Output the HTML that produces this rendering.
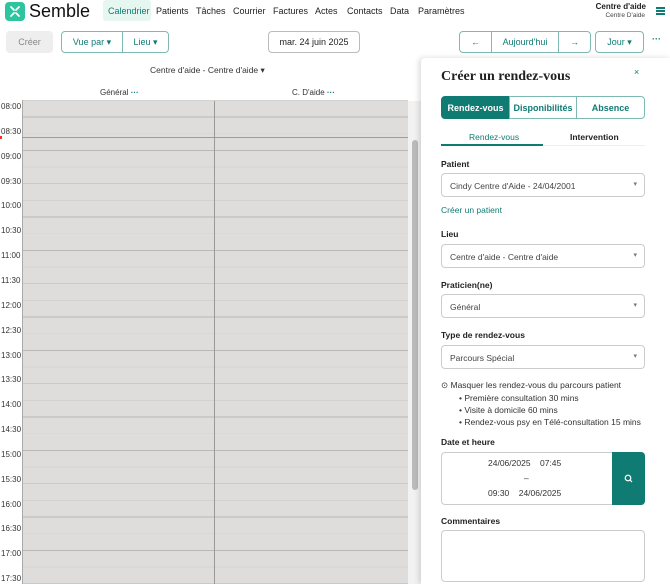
<!DOCTYPE html>
<html><head><meta charset="utf-8"><style>
*{box-sizing:border-box;margin:0;padding:0}
body{width:670px;height:584px;overflow:hidden;background:#fff;font-family:"Liberation Sans",sans-serif;color:#222;position:relative;font-size:9px}
.a{position:absolute}
.nav span{position:absolute;top:6px;font-size:9px;color:#222}
.btn{position:absolute;border:1px solid #7fb9b3;border-radius:4px;color:#0f7b73;font-size:9px;display:flex;align-items:center;justify-content:center;background:#fff}
.sel{position:absolute;left:441px;width:204px;height:24px;border:1px solid #ccc;border-radius:4px;font-size:8.5px;color:#444;padding:7px 0 0 8px}
.sel:after{content:"▾";position:absolute;right:7px;top:6px;font-size:7px;color:#777}
.fl{position:absolute;left:441px;font-size:8.5px;font-weight:bold;color:#222}
</style></head><body>
<div class="a" style="left:5px;top:2px;width:20px;height:19px;background:#2ec4a0;border-radius:4px"></div>
<svg class="a" style="left:5px;top:2px" width="20" height="19"><g stroke="#fff" stroke-width="1.8" stroke-linecap="round"><path d="M6 5l3 3M14 5l-3 3M6 14l3-3M14 14l-3-3"/></g></svg>
<div class="a" style="left:29px;top:1px;font-size:18px;color:#111">Semble</div>
<div class="a" style="left:103px;top:0;width:48px;height:21px;background:#e6f6f1;border-radius:3px"></div>
<div class="nav">
<span style="left:108px;color:#0f7b73">Calendrier</span><span style="left:156px">Patients</span><span style="left:196px">Tâches</span><span style="left:233px">Courrier</span><span style="left:273px">Factures</span><span style="left:315px">Actes</span><span style="left:347px">Contacts</span><span style="left:390px">Data</span><span style="left:418px">Paramètres</span>
</div>
<div class="a" style="right:24px;top:2px;font-size:8px;font-weight:bold;text-align:right">Centre d'aide</div>
<div class="a" style="right:25px;top:12px;font-size:6.5px;color:#444">Centre D'aide</div>
<div class="a" style="left:656px;top:7px;width:9px;height:1.5px;background:#0f7b73;box-shadow:0 3px #0f7b73,0 6px #0f7b73"></div>
<div class="a" style="left:6px;top:31px;width:47px;height:22px;background:#eee;border-radius:4px;color:#888;font-size:9px;display:flex;align-items:center;justify-content:center">Créer</div>
<div class="btn" style="left:61px;top:31px;width:62px;height:22px;border-radius:4px 0 0 4px">Vue par ▾</div>
<div class="btn" style="left:122px;top:31px;width:47px;height:22px;border-radius:0 4px 4px 0">Lieu ▾</div>
<div class="btn" style="left:268px;top:31px;width:92px;height:22px;border-color:#bbb;color:#222">mar. 24 juin 2025</div>
<div class="btn" style="left:459px;top:31px;width:33px;height:22px;border-radius:4px 0 0 4px">←</div>
<div class="btn" style="left:491px;top:31px;width:68px;height:22px;border-radius:0">Aujourd'hui</div>
<div class="btn" style="left:558px;top:31px;width:33px;height:22px;border-radius:0 4px 4px 0">→</div>
<div class="btn" style="left:595px;top:31px;width:49px;height:22px">Jour ▾</div>
<div class="a" style="left:652px;top:34px;color:#0f7b73;font-weight:bold">···</div>
<div class="a" style="left:150px;top:65px;font-size:8.5px;color:#333">Centre d'aide - Centre d'aide ▾</div>
<div class="a" style="left:100px;top:88px;font-size:8px;color:#333">Général <b style="color:#0f7b73">···</b></div>
<div class="a" style="left:292px;top:88px;font-size:8px;color:#333">C. D'aide <b style="color:#0f7b73">···</b></div>
<div class="a" style="left:22px;top:100px;width:386px;height:484px;background:#dedddb;background-image:repeating-linear-gradient(to bottom,#d2d2d2 0,#d2d2d2 0.8px,transparent 0.8px,transparent 16.67px,#b8b8b8 16.67px,#b8b8b8 17.5px,transparent 17.5px,transparent 33.33px);border-left:1px solid #aaa"></div>
<div class="a" style="left:214px;top:101px;width:1px;height:483px;background:#999"></div>
<div class="a" style="left:22px;top:137px;width:386px;height:1px;background:#e77"></div>
<div class="a" style="left:0;top:136px;width:2px;height:3px;background:#e33"></div>
<div class="a" style="left:408px;top:101px;width:13px;height:483px;background:#f2f2f2"></div>
<div class="a" style="left:412px;top:140px;width:6px;height:350px;background:#bbb;border-radius:3px"></div>
<div id="lbls"></div>
<script>
var t=["08:00","08:30","09:00","09:30","10:00","10:30","11:00","11:30","12:00","12:30","13:00","13:30","14:00","14:30","15:00","15:30","16:00","16:30","17:00","17:30"],h="";
for(var i=0;i<t.length;i++)h+='<div class="a" style="left:1px;top:'+(102+i*24.85)+'px;font-size:8px;color:#333">'+t[i]+'</div>';
document.getElementById('lbls').innerHTML=h;
</script>
<div class="a" style="left:421px;top:58px;width:249px;height:526px;background:#fff;box-shadow:-2px 0 6px rgba(0,0,0,.15);border-radius:4px 0 0 0"></div>
<div class="a" style="left:441px;top:69px;font-family:'Liberation Serif',serif;font-size:14px;font-weight:bold;color:#222">Créer un rendez-vous</div>
<div class="a" style="left:634px;top:67px;color:#0f7b73;font-size:9px">×</div>
<div class="btn" style="left:441px;top:96px;width:69px;height:23px;background:#0f7b73;color:#fff;font-weight:bold;border-color:#0f7b73;border-radius:4px 0 0 4px">Rendez-vous</div>
<div class="btn" style="left:509px;top:96px;width:68px;height:23px;border-radius:0;font-weight:bold">Disponibilités</div>
<div class="btn" style="left:576px;top:96px;width:69px;height:23px;border-radius:0 4px 4px 0;font-weight:bold">Absence</div>
<div class="a" style="left:469px;top:132px;font-size:8.5px;color:#0f7b73">Rendez-vous</div>
<div class="a" style="left:570px;top:132px;font-size:8.5px;font-weight:bold">Intervention</div>
<div class="a" style="left:441px;top:145px;width:204px;height:1px;background:#eee"></div>
<div class="a" style="left:441px;top:144px;width:102px;height:2px;background:#0f7b73"></div>
<div class="fl" style="top:159px">Patient</div>
<div class="sel" style="top:173px">Cindy Centre d'Aide - 24/04/2001</div>
<div class="a" style="left:441px;top:205px;font-size:8.5px;color:#0f7b73">Créer un patient</div>
<div class="fl" style="top:229px">Lieu</div>
<div class="sel" style="top:244px">Centre d'aide - Centre d'aide</div>
<div class="fl" style="top:280px">Praticien(ne)</div>
<div class="sel" style="top:294px">Général</div>
<div class="fl" style="top:330px">Type de rendez-vous</div>
<div class="sel" style="top:345px">Parcours Spécial</div>
<div class="a" style="left:441px;top:380px;font-size:8.5px;color:#333">⊙ Masquer les rendez-vous du parcours patient</div>
<div class="a" style="left:459px;top:392px;font-size:8.5px;color:#333;line-height:12.2px">• Première consultation 30 mins<br>• Visite à domicile 60 mins<br>• Rendez-vous psy en Télé-consultation 15 mins</div>
<div class="fl" style="top:437px">Date et heure</div>
<div class="a" style="left:441px;top:452px;width:204px;height:53px;border:1px solid #ccc;border-radius:4px"></div>
<div class="a" style="left:612px;top:452px;width:33px;height:53px;background:#0f7b73;border-radius:0 4px 4px 0"></div>
<svg class="a" style="left:624px;top:474px" width="9" height="9"><circle cx="4" cy="4" r="2.8" stroke="#fff" fill="none" stroke-width="1.2"/><path d="M6 6l2 2" stroke="#fff" stroke-width="1.2"/></svg>
<div class="a" style="left:488px;top:458px;font-size:8.5px;color:#333">24/06/2025 &nbsp;&nbsp;&nbsp;07:45</div>
<div class="a" style="left:524px;top:473px;font-size:8.5px;color:#333">–</div>
<div class="a" style="left:488px;top:488px;font-size:8.5px;color:#333">09:30 &nbsp;&nbsp;&nbsp;24/06/2025</div>
<div class="fl" style="top:516px">Commentaires</div>
<div class="a" style="left:441px;top:530px;width:204px;height:52px;border:1px solid #ccc;border-radius:4px"></div>
</body></html>
